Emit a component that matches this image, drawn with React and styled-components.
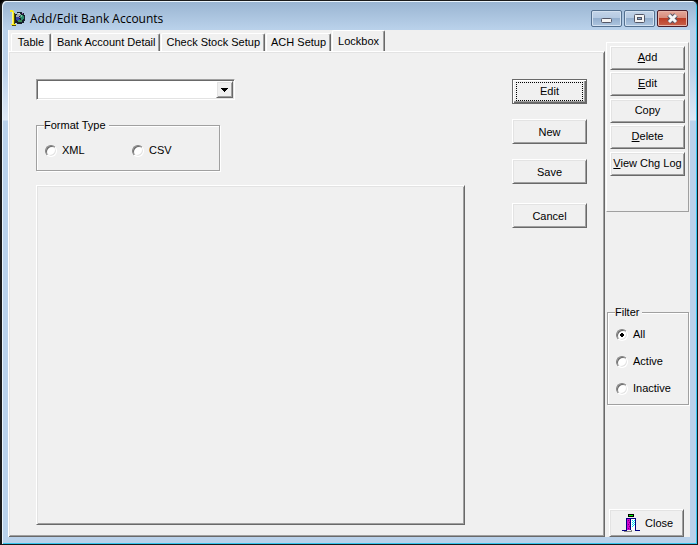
import React, { useState } from 'react'
import styled, { createGlobalStyle, css } from 'styled-components'

const tabs = ['Table', 'Bank Account Detail', 'Check Stock Setup', 'ACH Setup', 'Lockbox']
const filters = ['All', 'Active', 'Inactive']

const App = () => {
    const [tab, setTab] = useState('Lockbox')
    const [format, setFormat] = useState('')
    const [filter, setFilter] = useState('All')

    return (
        <Window>
            <GlobalStyle />
            <TitleBar>
                <AppIcon />
                <Title>Add/Edit Bank Accounts</Title>
                <CaptionButtons>
                    <CaptionButton aria-label="Minimize"><MinimizeGlyph /></CaptionButton>
                    <CaptionButton aria-label="Maximize"><MaximizeGlyph /></CaptionButton>
                    <CaptionButton aria-label="Close window" $close><CloseGlyph /></CaptionButton>
                </CaptionButtons>
            </TitleBar>
            <Client>
                <Main>
                    <TabList role="tablist">
                        {tabs.map((name) => (
                            <Tab key={name} role="tab" aria-selected={tab === name}
                                $active={tab === name} onClick={() => setTab(name)}>
                                {name}
                            </Tab>
                        ))}
                    </TabList>
                    <Page role="tabpanel" aria-label={tab}>
                        <Form>
                            <Combo>
                                <ComboSelect aria-label="Lockbox format">
                                    <option></option>
                                </ComboSelect>
                                <ComboArrow>
                                    <svg width="7" height="4" shapeRendering="crispEdges">
                                        <path d="M0 0h7v1H0zM1 1h5v1H1zM2 2h3v1H2zM3 3h1v1H3z" />
                                    </svg>
                                </ComboArrow>
                            </Combo>
                            <FormatGroup>
                                <Legend>Format Type</Legend>
                                <FormatOptions>
                                    {['XML', 'CSV'].map((name) => (
                                        <Option key={name}>
                                            <Radio type="radio" name="format" checked={format === name}
                                                onChange={() => setFormat(name)} />
                                            {name}
                                        </Option>
                                    ))}
                                </FormatOptions>
                            </FormatGroup>
                            <DetailPanel />
                        </Form>
                        <Actions>
                            <ActionButton $default><FocusRect>Edit</FocusRect></ActionButton>
                            <ActionButton>New</ActionButton>
                            <ActionButton>Save</ActionButton>
                            <ActionButton>Cancel</ActionButton>
                        </Actions>
                    </Page>
                </Main>
                <Side>
                    <SidePanel>
                        <ButtonPair>
                            <SideButton><u>A</u>dd</SideButton>
                            <SideButton><u>E</u>dit</SideButton>
                        </ButtonPair>
                        <ButtonPair>
                            <SideButton>Copy</SideButton>
                            <SideButton><u>D</u>elete</SideButton>
                        </ButtonPair>
                        <SideButton><u>V</u>iew Chg Log</SideButton>
                    </SidePanel>
                    <FilterGroup>
                        <Legend>Filter</Legend>
                        <FilterOptions>
                            {filters.map((name) => (
                                <Option key={name}>
                                    <Radio type="radio" name="filter" checked={filter === name}
                                        onChange={() => setFilter(name)} />
                                    {name}
                                </Option>
                            ))}
                        </FilterOptions>
                    </FilterGroup>
                    <CloseButton><DoorIcon />Close</CloseButton>
                </Side>
            </Client>
        </Window>
    )
}

export default App

const AppIcon = () => (
    <svg width="16" height="16" viewBox="0 0 16 16" aria-hidden="true" shapeRendering="crispEdges">
        <path d="M7 2h5v1h2v2h1v6h-1v2h-2v1H7v-1H5V4h2z" fill="#16202c" />
        <path d="M7 3h3v1h1v2H9v1H6V5h1z" fill="#a3a8ae" />
        <path d="M8 3h2v1H8z" fill="#d5d9dc" />
        <path d="M10 5h3v1h1v3h-1v1h-2V8h-1z" fill="#2c8a68" />
        <path d="M11 5h1v2h-1z" fill="#7fc4a6" />
        <path d="M6 7h3v2h1v2H7v-1H6z" fill="#3443a4" />
        <path d="M8 10h4v2H8z" fill="#3c8c54" />
        <path d="M12 3h1v1h-1zM9 7h1v1H9z" fill="#a34cae" />
        <path d="M4 3h1v11H4zM2 15h4v1H2z" fill="#524c00" />
        <path d="M0 0h3v1h1v13h2v1H1v-1h1V2H0z" fill="#f7e81c" />
        <path d="M2 2h1v12H2z" fill="#fff986" />
    </svg>
)

const MinimizeGlyph = () => (
    <svg width="11" height="9" aria-hidden="true">
        <rect x="0.5" y="4.5" width="10" height="4" rx="1" fill="#f4f4f4" stroke="#535666" />
    </svg>
)

const MaximizeGlyph = () => (
    <svg width="11" height="9" aria-hidden="true">
        <rect x="0.5" y="0.5" width="10" height="8" rx="1" fill="#f4f4f4" stroke="#535666" />
        <rect x="3.5" y="3.5" width="4" height="2" fill="#8ba9cc" stroke="#535666" />
    </svg>
)

const CloseGlyph = () => (
    <svg width="13" height="11" aria-hidden="true">
        <path d="M3 2l7 7M10 2l-7 7" stroke="#535666" strokeWidth="5" />
        <path d="M3 2l7 7M10 2l-7 7" stroke="#f6f6f6" strokeWidth="3" />
    </svg>
)

const DoorIcon = () => (
    <svg width="18" height="18" viewBox="0 0 18 18" aria-hidden="true" shapeRendering="crispEdges">
        <path d="M6 0h6v3H6z" fill="#000" />
        <path d="M7 1h4v1H7z" fill="#0f0" />
        <path d="M4 4h10v12h4v1h-5V5H5v12H0v-1h4z" fill="#000080" />
        <path d="M5 5h4v10H8v1H5z" fill="#d000d0" />
        <path d="M6 6h1v1H6zM7 8h1v1H7zM6 10h1v1H6zM7 12h1v1H7zM6 14h1v1H6z" fill="#800080" />
        <path d="M9 5h4v11H9z" fill="#fff" />
        <path d="M10 6h1v1h-1zM12 6h1v1h-1zM11 7h1v1h-1zM10 8h1v1h-1zM12 8h1v1h-1zM11 9h1v1h-1zM10 10h1v1h-1zM12 10h1v1h-1zM11 11h1v1h-1zM10 12h1v1h-1z" fill="#00e0f0" />
        <path d="M8 5h1v11H8z" fill="#000080" />
        <path d="M2 17h7v-1h1v2H2z" fill="#808080" />
    </svg>
)

const GlobalStyle = createGlobalStyle`
* {
  box-sizing: border-box;
}
body {
  margin: 0;
  background: #000;
  font-family: "Liberation Sans", Arial, sans-serif;
  font-size: 11px;
  line-height: 13px;
  color: #000;
}
button, select, input {
  font: inherit;
  color: inherit;
  margin: 0;
}
svg {
  flex: none;
}
`

const raised = css`
background: #f0f0f0;
border: 1px solid;
border-color: #fff #696969 #696969 #fff;
box-shadow: inset 1px 1px 0 #e3e3e3, inset -1px -1px 0 #a0a0a0;
`

const Window = styled.div`
display: flex;
flex-direction: column;
min-height: 100vh;
padding: 1px 7px 7px 6px;
border: 1px solid #1a1a1a;
border-left-width: 2px;
border-radius: 6px 6px 0 0;
background:
  linear-gradient(#99b4d1 0, #b9d1ea 28px, #bdd3eb 70px, #dfe9f5 119px, #b9d1ea 120px);
box-shadow: inset 1px 1px 0 #eaf4fc, inset -1px -1px 0 #35c5ee;
`

const TitleBar = styled.header`
display: flex;
align-items: flex-start;
height: 28px;
padding: 8px 2px 0;
`

const Title = styled.h1`
flex: 1;
margin: 0 0 0 4px;
font-family: "Open Sans", "Noto Sans", sans-serif;
font-size: 12px;
line-height: 18px;
font-weight: 400;
`

const CaptionButtons = styled.div`
display: flex;
gap: 2px;
`

const CaptionButton = styled.button`
display: flex;
align-items: center;
justify-content: center;
width: 31px;
height: 17px;
padding: 0;
border: 1px solid ${(p) => (p.$close ? '#4c1c28' : '#54708f')};
border-radius: 2px;
background: ${(p) => (p.$close
    ? 'linear-gradient(#e5a89b 0, #d78c7c 45%, #bd3e27 50%, #c8614a 100%)'
    : 'linear-gradient(#c3d4e8 0, #b5cae2 45%, #94afce 50%, #adc5df 100%)')};
box-shadow: inset 0 0 0 1px ${(p) => (p.$close ? '#e7b5a9' : '#d3e1f0')};
`

const Client = styled.div`
display: flex;
flex: 1;
border-left: 1px solid #fff;
background: #f0f0f0;
`

const Main = styled.main`
display: flex;
flex: 1;
flex-direction: column;
min-width: 0;
`

const TabList = styled.div`
display: flex;
align-items: flex-end;
gap: 1px;
height: 21px;
padding-left: 2px;
`

const Tab = styled.button`
min-width: 40px;
height: ${(p) => (p.$active ? 22 : 18)}px;
padding: ${(p) => (p.$active ? '0 5px 1px' : '0 4px')};
margin-bottom: ${(p) => (p.$active ? -1 : 0)}px;
border: 1px solid #fff;
border-right: 1px solid #696969;
border-bottom: 0;
border-radius: 2px 2px 0 0;
background: #f0f0f0;
box-shadow: inset -1px 0 0 #a0a0a0;
white-space: nowrap;
`

const Page = styled.section`
display: grid;
flex: 1;
grid-template-columns: 1fr 75px;
gap: 47px;
padding: 27px 17px 11px 27px;
border: 1px solid;
border-color: #fff #696969 #696969 #fff;
border-left: 0;
box-shadow: inset 1px 1px 0 #e3e3e3, inset -1px -1px 0 #a0a0a0;
`

const Form = styled.div`
display: flex;
flex-direction: column;
min-width: 0;
`

const Combo = styled.div`
display: grid;
grid-template-columns: 1fr 17px;
width: 199px;
height: 21px;
margin-bottom: 19px;
border: 1px solid;
border-color: #a0a0a0 #fff #fff #a0a0a0;
box-shadow: inset 1px 1px 0 #696969, inset -1px -1px 0 #e3e3e3;
padding: 1px;
`

const ComboSelect = styled.select`
grid-area: 1 / 1 / 2 / 3;
appearance: none;
min-width: 0;
padding: 0 20px 0 3px;
border: 0;
border-radius: 0;
outline: 0;
background: #fff;
`

const ComboArrow = styled.span`
${raised}
display: flex;
grid-area: 1 / 2 / 2 / 3;
align-items: center;
justify-content: center;
pointer-events: none;
`

const Group = styled.fieldset`
min-width: 0;
margin: 0;
border: 1px solid #a0a0a0;
box-shadow: 1px 1px 0 #fff, inset 1px 1px 0 #fff;
`

const FormatGroup = styled(Group)`
width: 184px;
padding: 12px 8px 13px;
margin-bottom: 14px;
`

const FilterGroup = styled(Group)`
padding: 9px 8px 9px;
margin: 94px 1px 0;
`

const Legend = styled.legend`
padding: 0 3px 0 0;
margin-left: -1px;
background: #f0f0f0;
`

const FormatOptions = styled.div`
display: grid;
grid-template-columns: 87px 1fr;
`

const FilterOptions = styled.div`
display: flex;
flex-direction: column;
gap: 14px;
`

const Option = styled.label`
display: flex;
align-items: center;
gap: 5px;
`

const Radio = styled.input`
appearance: none;
width: 12px;
height: 12px;
border: 1px solid;
border-color: #808080 #fff #fff #808080;
border-radius: 50%;
background: #fff;
box-shadow: inset 1px 1px 0 #696969, inset -1px -1px 0 #e3e3e3;

&:checked {
  background: radial-gradient(circle, #000 2px, #fff 2px);
}
`

const DetailPanel = styled.div`
${raised}
flex: 1;
min-height: 120px;
`

const Actions = styled.div`
display: flex;
flex-direction: column;
gap: 15px;
`

const Button = styled.button`
${raised}
padding: 0;
text-align: center;
white-space: nowrap;
`

const ActionButton = styled(Button)`
height: 25px;
padding-top: 2px;

${(p) => p.$default && css`
  padding: 2px;
  border-color: #696969;
  box-shadow: inset 1px 1px 0 #fff, inset -1px -1px 0 #696969, inset -2px -2px 0 #a0a0a0;
`}

&:last-child {
  margin-top: 4px;
}
`

const FocusRect = styled.span`
display: flex;
align-items: center;
justify-content: center;
height: 100%;
margin: 0 1px;
border: 1px dotted #000;
`

const Side = styled.aside`
display: flex;
flex-direction: column;
width: 85px;
padding: 12px 0 0 1px;
`

const SidePanel = styled.div`
display: flex;
flex-direction: column;
gap: 3px;
height: 170px;
padding: 3px;
border: 1px solid;
border-color: #fff #a0a0a0 #a0a0a0 #fff;
margin-right: 1px;
`

const ButtonPair = styled.div`
display: flex;
flex-direction: column;
gap: 2px;
`

const SideButton = styled(Button)`
height: 24px;
padding-bottom: 2px;
`

const CloseButton = styled(Button)`
display: flex;
align-items: center;
gap: 5px;
height: 28px;
padding: 0 0 0 12px;
margin: auto 6px 0 3px;
`
